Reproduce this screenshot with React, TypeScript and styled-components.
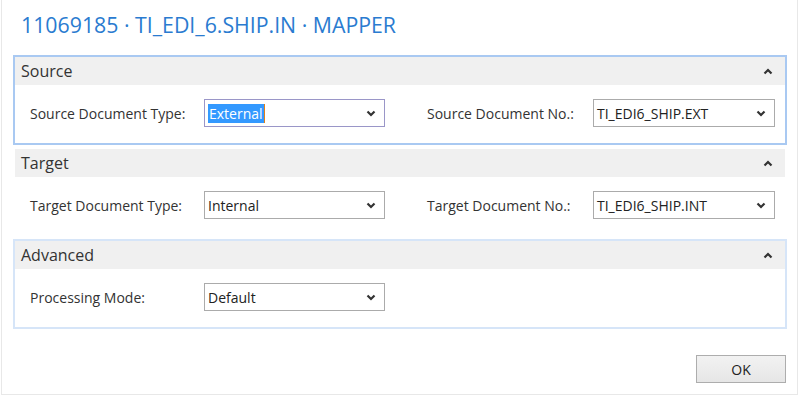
import React from 'react';
import styled, { createGlobalStyle } from 'styled-components';

const GlobalStyle = createGlobalStyle`
  html, body {
    margin: 0;
    padding: 0;
    background: #ffffff;
    font-family: 'Open Sans', 'Noto Sans', 'Liberation Sans', sans-serif;
    color: #333333;
  }
`;

const SWindow = styled.div`
  box-sizing: border-box;
  width: 797px;
  height: 395px;
  margin-left: 1px;
  border: 1px solid #e8e8e8;
  border-top: none;
  display: flex;
  flex-direction: column;
  padding: 0 10px 0 11px;
`;

const STitle = styled.h1`
  margin: 0;
  padding: 10px 0 0 8px;
  height: 55px;
  box-sizing: border-box;
  font-size: 21.3px;
  font-weight: 400;
  color: #2a7bd0;
`;

const SPanels = styled.div`
  display: flex;
  flex-direction: column;
  gap: 2px;
`;

const SPanel = styled.section<{ $state: 'focus' | 'hover' | 'none' }>`
  box-sizing: border-box;
  height: 90px;
  border: 2px solid
    ${({ $state }) => ($state === 'focus' ? '#a9c9f2' : $state === 'hover' ? '#d6e5f8' : 'transparent')};
  display: flex;
  flex-direction: column;
`;

const SPanelHeader = styled.div`
  display: flex;
  align-items: center;
  justify-content: space-between;
  height: 28px;
  background: #f0f0f0;
  padding: 0 12px 0 6px;
  font-size: 16px;
  color: #333333;
`;

const SPanelBody = styled.div`
  flex: 1;
  display: flex;
  align-items: center;
  padding: 0 0 2px 15px;
`;

const SField = styled.div<{ $gap?: number }>`
  display: flex;
  align-items: center;
  margin-right: ${({ $gap }) => $gap ?? 0}px;
`;

const SLabel = styled.label<{ $width: number }>`
  width: ${({ $width }) => $width}px;
  font-size: 14px;
  color: #333333;
  white-space: nowrap;
`;

const SSelect = styled.div<{ $width: number; $focused?: boolean }>`
  box-sizing: border-box;
  width: ${({ $width }) => $width}px;
  height: 28px;
  display: flex;
  align-items: center;
  justify-content: space-between;
  border: 1px solid ${({ $focused }) => ($focused ? '#9a96c8' : '#ababab')};
  background: #ffffff;
  padding: 0 8px 0 3px;
  font-size: 14px;
  color: #222222;
`;

const SSelected = styled.span`
  background: #3399ff;
  color: #ffffff;
  padding: 0 1px;
  border-right: 1px solid #e0801a;
  line-height: 19px;
`;

const SFooter = styled.div`
  flex: 1;
  display: flex;
  justify-content: flex-end;
  align-items: flex-start;
  padding-top: 26px;
`;

const SButton = styled.button`
  box-sizing: border-box;
  width: 90px;
  height: 28px;
  border: 1px solid #adadad;
  background: linear-gradient(#f2f2f2, #e6e6e6);
  font-family: inherit;
  font-size: 14px;
  color: #222222;
  margin-right: 1px;
`;

const Chevron = ({ up }: { up?: boolean }) => (
  <svg width='10' height='7' viewBox='0 0 10 7'>
    <path
      d={up ? 'M1.5 5.5 L5 2 L8.5 5.5' : 'M1.5 1.5 L5 5 L8.5 1.5'}
      fill='none'
      stroke='#333'
      strokeWidth='2.2'
    />
  </svg>
);

interface FieldProps {
  label: string;
  labelWidth: number;
  value: string;
  selectWidth: number;
  gap?: number;
  focused?: boolean;
}

function Field({ label, labelWidth, value, selectWidth, gap, focused }: FieldProps) {
  return (
    <SField $gap={gap}>
      <SLabel $width={labelWidth}>{label}</SLabel>
      <SSelect $width={selectWidth} $focused={focused}>
        {focused ? <SSelected>{value}</SSelected> : <span>{value}</span>}
        <Chevron />
      </SSelect>
    </SField>
  );
}

function Panel({ title, state, children }: { title: string; state: 'focus' | 'hover' | 'none'; children: React.ReactNode }) {
  return (
    <SPanel $state={state}>
      <SPanelHeader>
        {title}
        <Chevron up />
      </SPanelHeader>
      <SPanelBody>{children}</SPanelBody>
    </SPanel>
  );
}

export default function App() {
  return (
    <>
      <GlobalStyle />
      <SWindow>
        <STitle>11069185 · TI_EDI_6.SHIP.IN · MAPPER</STitle>
        <SPanels>
          <Panel title='Source' state='focus'>
            <Field label='Source Document Type:' labelWidth={174} value='External' selectWidth={181} gap={42} focused />
            <Field label='Source Document No.:' labelWidth={166} value='TI_EDI6_SHIP.EXT' selectWidth={182} />
          </Panel>
          <Panel title='Target' state='none'>
            <Field label='Target Document Type:' labelWidth={174} value='Internal' selectWidth={181} gap={42} />
            <Field label='Target Document No.:' labelWidth={166} value='TI_EDI6_SHIP.INT' selectWidth={182} />
          </Panel>
          <Panel title='Advanced' state='hover'>
            <Field label='Processing Mode:' labelWidth={174} value='Default' selectWidth={181} />
          </Panel>
        </SPanels>
        <SFooter>
          <SButton>OK</SButton>
        </SFooter>
      </SWindow>
    </>
  );
}
